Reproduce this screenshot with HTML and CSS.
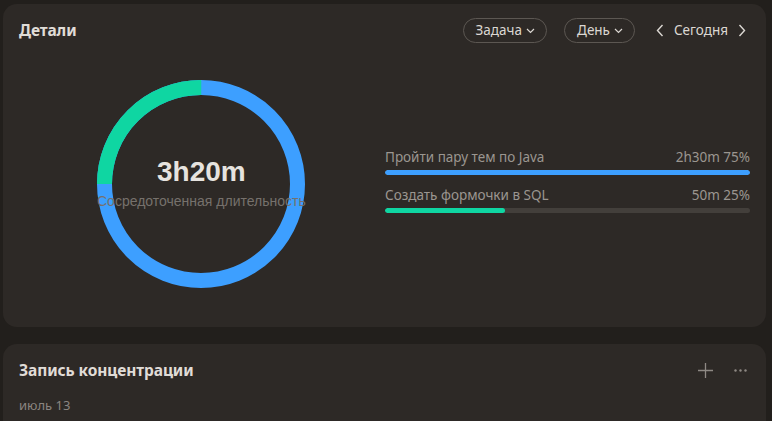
FILE: index.html
```html
<!DOCTYPE html>
<html lang="ru">
<head>
  <meta charset="UTF-8">
  <meta name="viewport" content="width=device-width, initial-scale=1.0">
  <title>Детали</title>
  <link rel="stylesheet" href="styles.css">
</head>
<body>
  <section class="card details">
    <div class="card-head">
      <h2 class="card-title">Детали</h2>
      <div class="controls">
        <button class="pill">Задача
          <svg class="caret" width="9" height="6" viewBox="0 0 9 6"><path d="M1 1l3.5 3.5L8 1" fill="none" stroke="currentColor" stroke-width="1.2"/></svg>
        </button>
        <button class="pill">День
          <svg class="caret" width="9" height="6" viewBox="0 0 9 6"><path d="M1 1l3.5 3.5L8 1" fill="none" stroke="currentColor" stroke-width="1.2"/></svg>
        </button>
        <div class="date-nav">
          <svg width="8" height="13" viewBox="0 0 8 13"><path d="M6.5 1L1.5 6.5l5 5.5" fill="none" stroke="currentColor" stroke-width="1.4"/></svg>
          <span>Сегодня</span>
          <svg width="8" height="13" viewBox="0 0 8 13"><path d="M1.5 1l5 5.5-5 5.5" fill="none" stroke="currentColor" stroke-width="1.4"/></svg>
        </div>
      </div>
    </div>

    <div class="details-body">
      <div class="donut">
        <svg width="208" height="208" viewBox="0 0 208 208">
          <circle cx="104" cy="104" r="96.5" fill="none" stroke="#3d9fff" stroke-width="15"/>
          <!-- 25% share, from 9 o'clock up to 12 -->
          <circle cx="104" cy="104" r="96.5" fill="none" stroke="#0fd6a2" stroke-width="15"
                  stroke-dasharray="151.6 606.3" transform="rotate(180 104 104)"/>
        </svg>
        <div class="donut-text">
          <div class="total">3h20m</div>
          <div class="total-label">Сосредоточенная длительность</div>
        </div>
      </div>

      <div class="tasks">
        <div class="task">
          <div class="task-row">
            <span>Пройти пару тем по Java</span>
            <span>2h30m 75%</span>
          </div>
          <div class="track"><div class="fill blue" style="width: 100%"></div></div>
        </div>
        <div class="task">
          <div class="task-row">
            <span>Создать формочки в SQL</span>
            <span>50m 25%</span>
          </div>
          <div class="track"><div class="fill green" style="width: 33%"></div></div>
        </div>
      </div>
    </div>
  </section>

  <section class="card records">
    <div class="card-head">
      <h2 class="card-title">Запись концентрации</h2>
      <div class="actions">
        <svg width="15" height="15" viewBox="0 0 15 15"><path d="M7.5 0v15M0 7.5h15" stroke="#8e8984" stroke-width="1.3"/></svg>
        <svg width="13" height="3" viewBox="0 0 13 3"><circle cx="1.5" cy="1.5" r="1.2" fill="#8e8984"/><circle cx="6.5" cy="1.5" r="1.2" fill="#8e8984"/><circle cx="11.5" cy="1.5" r="1.2" fill="#8e8984"/></svg>
      </div>
    </div>
    <div class="day">июль 13</div>
  </section>
</body>
</html>
```

FILE: styles.css
```css
body {
  margin: 0;
  padding: 4px 6px 0 3px;
  background: #221f1c;
  color: #e2ded9;
  font-family: 'Noto Sans', 'DejaVu Sans', sans-serif;
  height: 100vh;
  box-sizing: border-box;
  overflow: hidden;
}

.card {
  background: #2d2926;
  border-radius: 14px;
  padding: 0 16px;
}

.details {
  height: 323px;
  margin-bottom: 17px;
}

.card-head {
  display: flex;
  align-items: center;
  justify-content: space-between;
  height: 26px;
  padding-top: 13px;
}

.card-title {
  margin: 0;
  font-size: 15.5px;
  font-weight: 700;
  color: #e0dcd7;
  letter-spacing: -0.1px;
}

.controls {
  display: flex;
  align-items: center;
  gap: 17px;
}

.pill {
  display: flex;
  align-items: center;
  gap: 4px;
  height: 25px;
  padding: 0 11px 0 12px;
  background: transparent;
  border: 1px solid #5c5752;
  border-radius: 13px;
  color: #dcd8d3;
  font-family: inherit;
  font-size: 13.5px;
  box-sizing: border-box;
}

.caret {
  margin-top: 1px;
}

.date-nav {
  display: flex;
  align-items: center;
  gap: 10px;
  margin-left: 4px;
  margin-right: 4px;
  color: #dcd8d3;
  font-size: 13.5px;
}

.details-body {
  display: flex;
  align-items: center;
  padding-left: 78px;
  margin-top: 37px;
}

.donut {
  display: grid;
  place-items: center;
  width: 208px;
  height: 208px;
}

.donut > * {
  grid-area: 1 / 1;
}

.donut-text {
  text-align: center;
  font-family: 'Liberation Sans', Arial, sans-serif;
  white-space: nowrap;
}

.total {
  font-size: 28px;
  font-weight: 700;
  line-height: 32px;
  color: #e6e3df;
  margin-top: -3px;
}

.total-label {
  font-size: 14px;
  color: #76716c;
  margin-top: 5px;
}

.tasks {
  flex: 1;
  margin-left: 80px;
  display: flex;
  flex-direction: column;
  gap: 11px;
  margin-top: -8px;
}

.task-row {
  display: flex;
  justify-content: space-between;
  font-size: 13.5px;
  color: #9b9690;
  line-height: 18px;
  margin-bottom: 4px;
}

.track {
  height: 5px;
  background: #433f3b;
  border-radius: 3px;
  overflow: hidden;
}

.fill {
  height: 100%;
  border-radius: 3px;
}

.fill.blue { background: #3d9fff; }
.fill.green { background: #0fd6a2; }

.records {
  height: 90px;
}

.actions {
  display: flex;
  align-items: center;
  gap: 21px;
  margin-right: 3px;
}

.day {
  margin-top: 13px;
  font-size: 13px;
  color: #8a8580;
}
```
